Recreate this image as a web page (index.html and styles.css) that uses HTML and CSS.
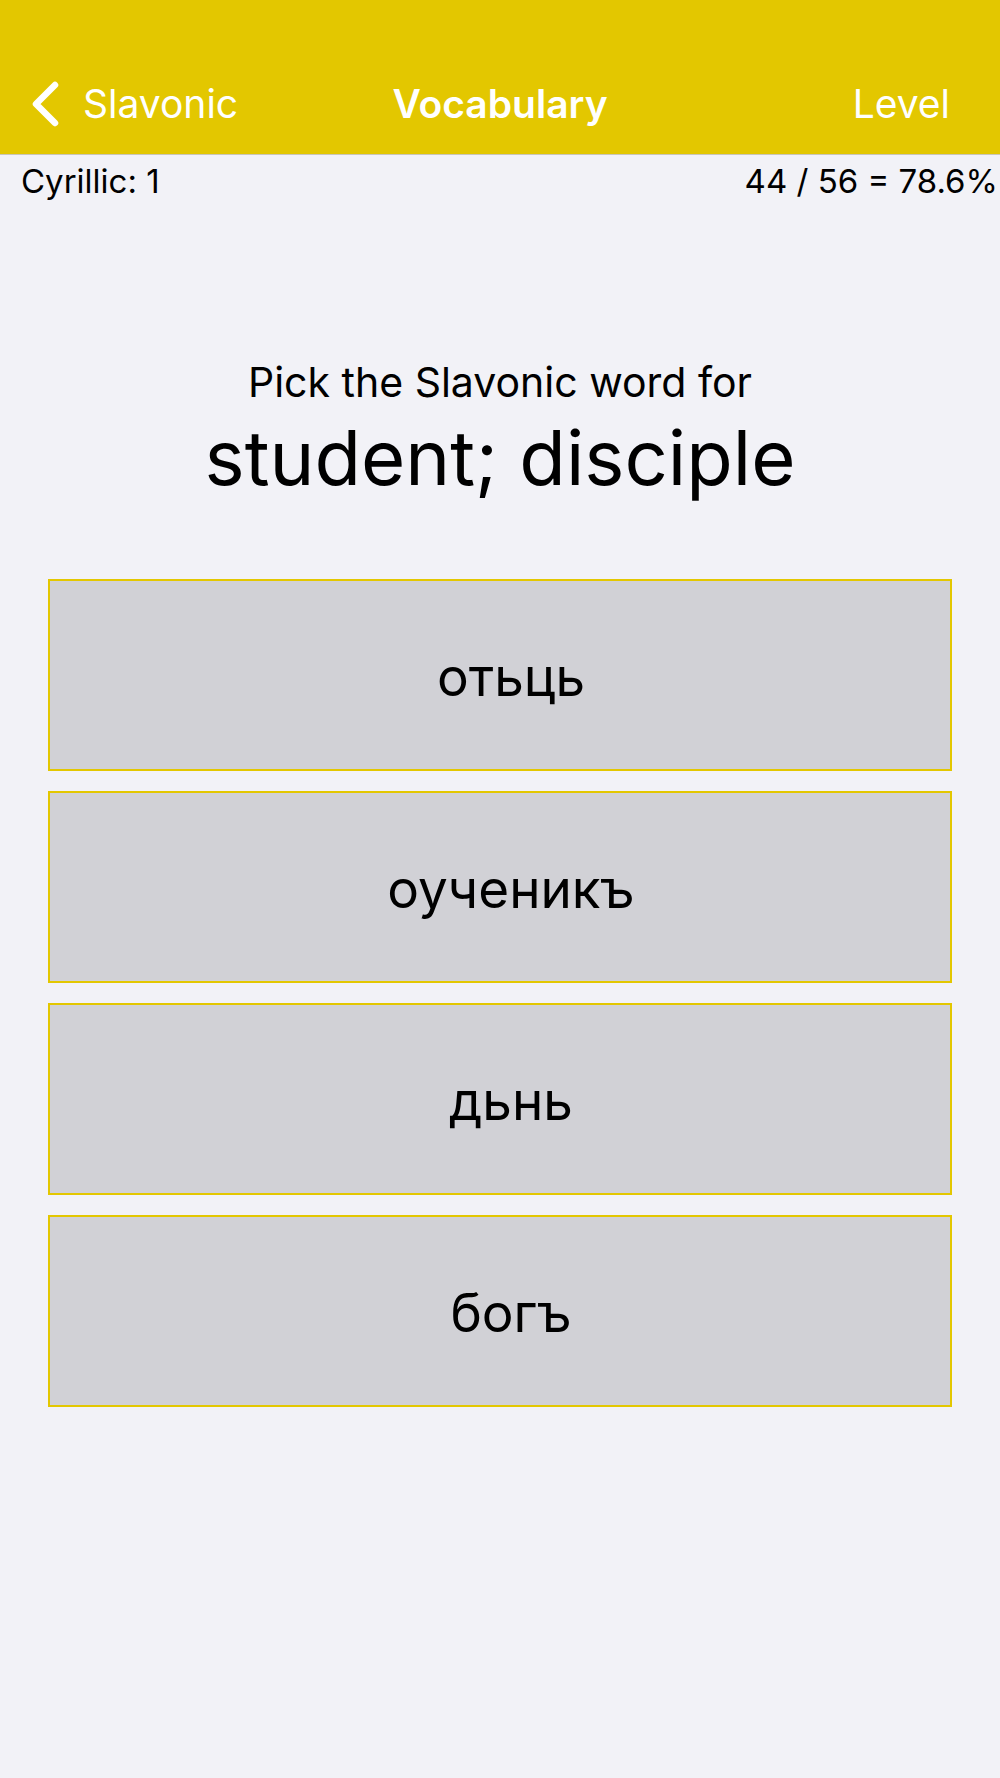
FILE: index.html
```html
<!DOCTYPE html>
<html lang="en">
<head>
    <meta charset="UTF-8">
    <meta name="viewport" content="width=device-width, initial-scale=1.0">
    <title>Vocabulary</title>
    <link rel="stylesheet" href="styles.css">
</head>
<body>
    <header class="nav">
        <a class="nav-back" href="#">
            <svg class="chevron" width="28" height="46" viewBox="0 0 28 46">
                <polyline points="24,4 5,23 24,42" fill="none" stroke="#fff" stroke-width="6.5" stroke-linecap="round" stroke-linejoin="round"/>
            </svg>
            <span>Slavonic</span>
        </a>
        <h1 class="nav-title">Vocabulary</h1>
        <a class="nav-action" href="#">Level</a>
    </header>

    <div class="stats">
        <span>Cyrillic: 1</span>
        <span>44 / 56 = 78.6%</span>
    </div>

    <main class="quiz">
        <p class="prompt">Pick the Slavonic word for</p>
        <p class="target">student; disciple</p>

        <div class="choices">
            <button class="choice">отьць</button>
            <button class="choice">оученикъ</button>
            <button class="choice">дьнь</button>
            <button class="choice">богъ</button>
        </div>
    </main>
</body>
</html>
```

FILE: styles.css
```css
body {
    margin: 0;
    background-color: #f2f2f7;
    font-family: Inter, "Noto Sans", sans-serif;
    color: #000;
}
a {
    color: inherit;
    text-decoration: none;
}

/* barra amarela do topo */
.nav {
    display: grid;
    grid-template-columns: 1fr auto 1fr;
    align-items: center;
    height: 101px;
    padding-top: 53px;
    background-color: #e3c700;
    border-bottom: 1px solid #c9c6b8;
    color: #fff;
    font-size: 39px;
}
.nav-back {
    display: flex;
    align-items: center;
    gap: 24px;
    padding-left: 31px;
}
.nav-title {
    margin: 0;
    font-size: 39px;
    font-weight: 600;
}
.nav-action {
    justify-self: end;
    padding-right: 50px;
}

.stats {
    display: flex;
    justify-content: space-between;
    padding: 6px 2px 0 21px;
    font-size: 33px;
    line-height: 40px;
}

.quiz {
    padding: 0 48px;
    text-align: center;
}
.prompt {
    margin: 156px 0 0;
    font-size: 41px;
    line-height: 50px;
}
.target {
    margin: 0;
    font-size: 76px;
    line-height: 100px;
}

.choices {
    display: flex;
    flex-direction: column;
    gap: 20px;
    margin-top: 72px;
}
.choice {
    height: 192px;
    border: 2px solid #e3c700;
    background-color: #d1d1d6;
    font-family: inherit;
    font-size: 53px;
    color: #000;
    padding: 4px 0 0 22px;
}
```
